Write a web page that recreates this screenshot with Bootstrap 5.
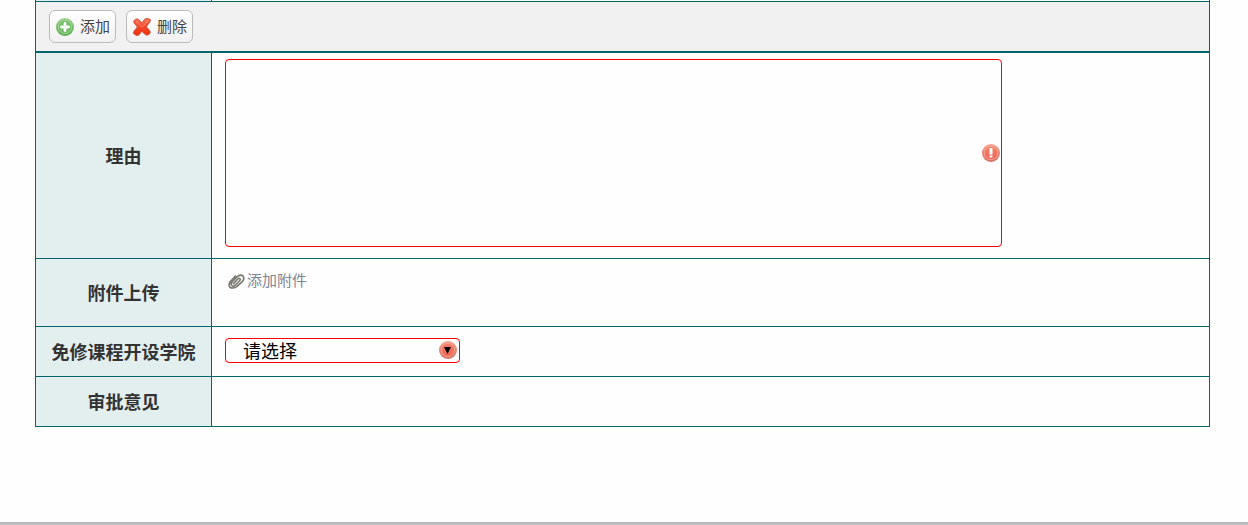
<!DOCTYPE html>
<html lang="zh-CN">
<head>
<meta charset="utf-8">
<meta name="viewport" content="width=device-width, initial-scale=1">
<title>课程免修申请</title>
<link href="https://cdn.jsdelivr.net/npm/bootstrap@5.3.0/dist/css/bootstrap.min.css" rel="stylesheet">
<style>
  :root { --line: #00666b; --head: #e3efef; --warn: #ff0000; }
  body { font-family: "Liberation Sans", "Noto Sans CJK SC", sans-serif; font-size: 15px; line-height: 20px; color: #333; background: #fefefe; }
  .sheet { margin: 0 38px 0 35px; border: solid var(--line); border-width: 0 1px; background: #fefefe; }
  .form-line { border-bottom: 1px solid var(--line); }
  .form-line.reason { min-height: 206px; }
  .form-line.attach { min-height: 68px; }
  .form-line.plain { min-height: 50px; }
  .form-line.previous { height: 2px; }
  .caption { flex: 0 0 176px; background: var(--head); border-right: 1px solid var(--line); font-size: 18px; font-weight: 700; line-height: 24px; }
  label.caption, .caption-text { padding-top: 2px; }
  .content { padding: 0 13px; min-width: 0; }
  .toolbar { height: 51px; padding: 8px 13px; gap: 10px; background: #f1f1f1; border-bottom: 2px solid var(--line); }
  .tool { height: 33px; padding: 0 5px 0 6px; gap: 6px; border: 1px solid #bbb; border-radius: 6px; background: linear-gradient(#fff, #f1f1f1); color: #444; font-size: 15px; line-height: 20px; }
  .tool svg { width: 18px; height: 18px; }
  .reason-wrap { width: 80%; margin-top: 6px; }
  .reason-wrap textarea { height: 188px; resize: none; padding: 4px 24px 4px 6px; }
  .required { border: 1px solid var(--warn); border-radius: 4px; background: #fefefe; color: #000; font-size: 18px; line-height: 24px; }
  .flag { position: absolute; right: 2px; top: 50%; width: 18px; height: 18px; transform: translateY(-50%); pointer-events: none; }
  .college-wrap .flag { right: 3px; top: 3px; transform: none; }
  .attach-link { gap: 2px; padding: 12px 0 0 3px; color: #7c8593; text-decoration: none; }
  .attach-link svg { width: 17px; height: 16px; }
  .college-wrap { width: 235px; margin-top: 11px; height: 25px; }
  .college-wrap select { height: 25px; appearance: none; padding: 3px 24px 0 17px; line-height: 20px; }
  .page-edge { height: 3px; background: linear-gradient(#b1b4b4, #c4c7c6); }
</style>
<script src="https://cdn.jsdelivr.net/npm/bootstrap@5.3.0/dist/js/bootstrap.bundle.min.js"></script>
</head>
<body class="d-flex flex-column min-vh-100">
<svg width="0" height="0" class="position-absolute" aria-hidden="true">
  <defs>
    <linearGradient id="green" x1="0" y1="0" x2="0" y2="1"><stop offset="0" stop-color="#9bd18c"/><stop offset="1" stop-color="#58a94e"/></linearGradient>
    <linearGradient id="cross" x1="0" y1="0" x2="0" y2="1"><stop offset="0" stop-color="#ff7a5c"/><stop offset=".5" stop-color="#f0452a"/><stop offset="1" stop-color="#f4340b"/></linearGradient>
    <linearGradient id="coral" x1="0" y1="0" x2="0" y2="1"><stop offset="0" stop-color="#f9a08b"/><stop offset="1" stop-color="#d46e62"/></linearGradient>
    <linearGradient id="coralIn" x1="0" y1="0" x2="0" y2="1"><stop offset="0" stop-color="#f47f68"/><stop offset="1" stop-color="#ec6658"/></linearGradient>
  </defs>
</svg>
<main class="sheet">
  <div class="form-line previous d-flex"><div class="caption"></div></div>
  <div class="toolbar d-flex">
    <button type="button" class="tool d-flex align-items-center">
      <svg viewBox="0 0 18 18" aria-hidden="true"><circle cx="9" cy="9" r="9" fill="url(#green)"/><circle cx="9" cy="9" r="6.7" fill="#74bd68" stroke="#a7d69c" stroke-width=".9"/><path d="M9 5.5v7M5.5 9h7" stroke="#fff" stroke-width="2.8" stroke-linecap="round"/></svg>
      <span>添加</span>
    </button>
    <button type="button" class="tool d-flex align-items-center">
      <svg viewBox="0 0 18 18" aria-hidden="true"><path d="M2.4 1.2Q4.6.2 6 1.9L8.9 4.9 11.6 1.3Q12.8.1 14.6.5l2 .5q1.5.8.6 2.4L13.4 8.7l3.3 4q1.1 1.6 0 3-1.3 1.5-3 1.4-1.3 0-2.1-1.1L8.8 13.2l-2.5 3.3Q4.9 18 3.1 17.2L1 15.9q-1-1-.1-2.5L4.4 9 1.2 5.1Q-.2 2.6 2.4 1.2Z" fill="url(#cross)" stroke="#c83d28" stroke-width=".8"/><path d="M2.9 2.9 8.7 8.8M15 2.5 9.6 8.6" stroke="#ff9078" stroke-width="1.2" stroke-linecap="round" opacity=".6"/></svg>
      <span>删除</span>
    </button>
  </div>

  <div class="form-line reason d-flex">
    <label class="caption d-flex align-items-center justify-content-center" for="reason">理由</label>
    <div class="content flex-grow-1">
      <div class="reason-wrap position-relative">
        <textarea id="reason" class="required d-block w-100" required></textarea>
        <svg class="flag" viewBox="0 0 18 18" aria-hidden="true"><circle cx="9" cy="9" r="9" fill="url(#coral)"/><circle cx="9" cy="9" r="6.7" fill="url(#coralIn)" stroke="#f9ac98" stroke-width=".8"/><path d="M7.5 4h3v6.6h-3zM7.5 11.6h3v2h-3z" fill="#fff"/></svg>
      </div>
    </div>
  </div>

  <div class="form-line attach d-flex">
    <div class="caption caption-text d-flex align-items-center justify-content-center">附件上传</div>
    <div class="content flex-grow-1">
      <a href="#" class="attach-link d-inline-flex align-items-center">
        <svg viewBox="0 0 17 16" fill="none" stroke="#77776d" stroke-width="1.6" stroke-linecap="round" stroke-linejoin="round" aria-hidden="true"><path d="M5.4 10.6 10 5.8q1.3-1 2 0 .6.8-.3 1.9L7 12.4q-2 1.4-3.3.1-1.3-1.4.1-3.3L8.9 3.9q3-2.8 5.8-1.2 2.3 2.4-.1 5.6L8.8 13.6q-3.7 2.3-6.6.9-2.3-2.6.1-6L7.5 3"/></svg>
        <span>添加附件</span>
      </a>
    </div>
  </div>

  <div class="form-line plain d-flex">
    <label class="caption d-flex align-items-center justify-content-center" for="college">免修课程开设学院</label>
    <div class="content flex-grow-1">
      <div class="college-wrap position-relative">
        <select id="college" class="required d-block w-100" required><option value="">请选择</option></select>
        <svg class="flag" viewBox="0 0 18 18" aria-hidden="true"><circle cx="9" cy="9" r="9" fill="url(#coral)"/><circle cx="9" cy="9" r="6.7" fill="url(#coralIn)" stroke="#f9ac98" stroke-width=".8"/><path d="M5 6h7l-3.5 7Z" fill="#000"/></svg>
      </div>
    </div>
  </div>

  <div class="form-line plain d-flex">
    <div class="caption caption-text d-flex align-items-center justify-content-center">审批意见</div>
    <div class="content flex-grow-1"></div>
  </div>
</main>
<div class="page-edge mt-auto"></div>
</body>
</html>
